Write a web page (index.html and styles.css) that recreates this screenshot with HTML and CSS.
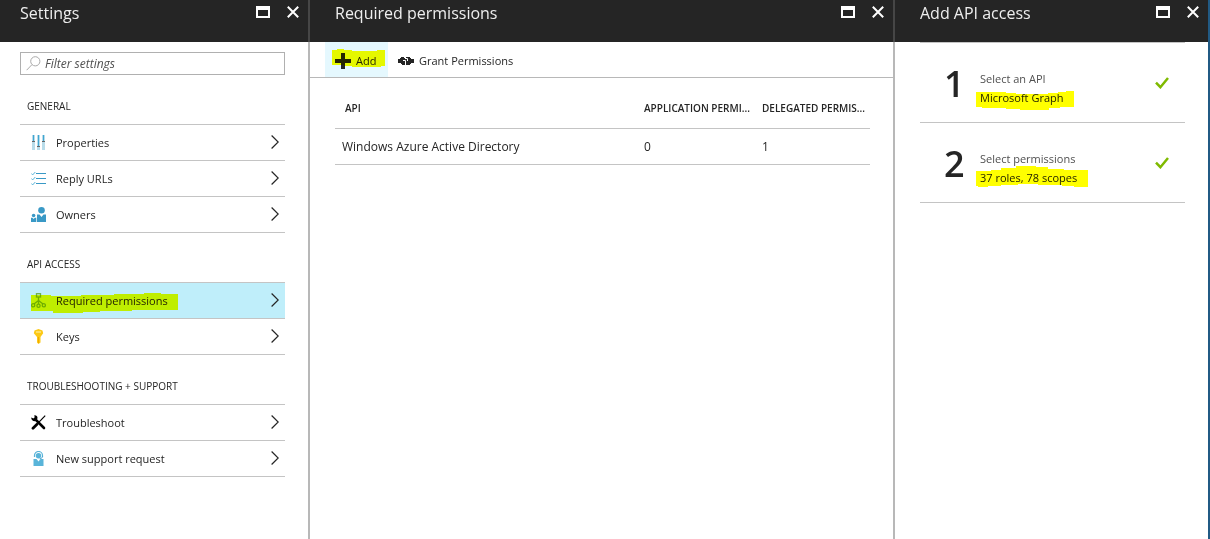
FILE: index.html
```html
<!DOCTYPE html>
<html lang="en">
<head>
<meta charset="utf-8">
<title>Settings</title>
<link rel="stylesheet" href="styles.css">
</head>
<body>
<svg class="defs" aria-hidden="true">
  <symbol id="max" viewBox="0 0 14 12"><path d="M0 0h14v12H0zM2 4v6h10V4z" fill="currentColor" fill-rule="evenodd"/></symbol>
  <symbol id="close" viewBox="0 0 12 12"><path d="M.8.8l10.4 10.4M11.2.8L.8 11.2" stroke="currentColor" stroke-width="2" fill="none"/></symbol>
  <symbol id="chev" viewBox="0 0 8 15"><path d="M.6.5L7.2 7 .6 13.500" stroke="currentColor" stroke-width="1.2" fill="none"/></symbol>
  <symbol id="tick" viewBox="0 0 14 12"><path d="M1 5.6l4.4 4.6L13 1" stroke="#7fba00" stroke-width="2.500" fill="none"/></symbol>
</svg>
<main class="blades">
  <section class="blade">
    <header class="blade-head">
      <h1>Settings</h1>
      <button class="win" aria-label="Maximize settings"><svg width="14" height="12"><use href="#max"/></svg></button>
      <button class="win" aria-label="Close settings"><svg width="12" height="12"><use href="#close"/></svg></button>
    </header>
    <div class="settings">
      <label class="filter">
        <svg width="15" height="15" viewBox="0 0 15 15" fill="none" stroke="#aaa"><circle cx="9.3" cy="5.3" r="4.6"/><path d="M6 8.6L.6 14.2"/></svg>
        <input type="text" placeholder="Filter settings" aria-label="Filter settings">
      </label>
      <h2>GENERAL</h2>
      <ul class="menu">
        <li><a href="#properties">
          <svg class="icon" viewBox="0 0 15 15"><path d="M1 0h3v15H1zM6 0h3v15H6zM11 0h3v15h-3z" fill="#b8dcea"/><path d="M2 0h1v6H2zM7 0h1v11H7zM12 0h1v6h-1z" fill="#3fa6d2"/><path d="M1 6h3v1H1zM6 11h3v1H6zM11 6h3v1h-3z" fill="#666"/></svg>
          <span>Properties</span><svg class="chev"><use href="#chev"/></svg></a></li>
        <li><a href="#reply-urls">
          <svg class="icon" viewBox="0 0 15 15"><g fill="none" stroke="#59b4d9"><path d="M.3 2.500l1.400 1.400L4.300 1M.3 7.500l1.400 1.400L4.300 6M.3 12.500l1.400 1.400L4.300 11"/><path d="M5 2.500h10M5 7.500h10M5 12.500h10" stroke="#3999c6"/></g></svg>
          <span>Reply URLs</span><svg class="chev"><use href="#chev"/></svg></a></li>
        <li><a href="#owners">
          <svg class="icon" viewBox="0 0 15 15" fill="#3999c6"><circle cx="10.500" cy="3.300" r="3.300"/><path d="M6 7.500h2.500l2 2.600 2-2.600H15V15H6z"/><circle cx="2.600" cy="8.500" r="1.800"/><path d="M0 10.800h1.500l1.100 1.300 1.100-1.300h1.600V15H0z"/></svg>
          <span>Owners</span><svg class="chev"><use href="#chev"/></svg></a></li>
      </ul>
      <h2>API ACCESS</h2>
      <ul class="menu">
        <li><a class="active" href="#required-permissions">
          <svg class="icon" viewBox="0 0 15 15" fill="none" stroke="#6fae4a" stroke-width="1.300"><rect x="5.500" y=".7" width="4" height="3.300"/><path d="M7.500 4v7M7.500 7.500L3 11M7.500 7.500l4.500 3.500"/><circle cx="2.200" cy="12.300" r="1.600"/><circle cx="7.500" cy="12.700" r="1.600"/><circle cx="12.800" cy="12.300" r="1.600"/></svg>
          <span>Required permissions</span><svg class="chev"><use href="#chev"/></svg>
          <svg class="mark mark-req" viewBox="0 0 147 21"><path d="M0 2h20v1h30V2h33V1h30V0h17v1h17v16h-46v1h-32v1H52v1H22v-2H0z"/></svg></a></li>
        <li><a href="#keys">
          <svg class="icon" viewBox="0 0 15 15"><path d="M7.500 0l4 1.500.7 2.800L9.500 8v5.500L7.500 15 6 13.500V8L2.800 4.300l.7-2.800z" fill="#fcc916"/><path d="M7.500 8v6" stroke="#f2a900"/><path d="M5 3h5" stroke="#fff3b0"/></svg>
          <span>Keys</span><svg class="chev"><use href="#chev"/></svg></a></li>
      </ul>
      <h2>TROUBLESHOOTING + SUPPORT</h2>
      <ul class="menu">
        <li><a href="#troubleshoot">
          <svg class="icon" viewBox="0 0 15 15"><path d="M4 4l9 9" stroke="#000" stroke-width="2.600" stroke-linecap="round"/><path d="M.3 2.500l2.200 1 1.200-1L3.300.3c2.200-.4 3.700 1.400 3 3.500L4.300 6.100C2.100 6.500 0 4.800.3 2.500z" fill="#000"/><path d="M14.200.7L7.500 7.600" stroke="#000" stroke-width="1.200"/><path d="M6 9.300l-4 4" stroke="#000" stroke-width="2.800" stroke-linecap="round"/></svg>
          <span>Troubleshoot</span><svg class="chev"><use href="#chev"/></svg></a></li>
        <li><a href="#new-support-request">
          <svg class="icon" viewBox="0 0 15 15"><path d="M3.500 6V4.500a4 4 0 0 1 8 0V6" fill="none" stroke="#59b4d9" stroke-width="1.200"/><circle cx="7.500" cy="4.700" r="2.700" fill="#59b4d9"/><path d="M2.500 8h3l2 2.600 2-2.600h3v7h-10z" fill="#59b4d9"/><path d="M11.500 5.500q0 2-2.800 2.300" fill="none" stroke="#3999c6" stroke-width=".8"/></svg>
          <span>New support request</span><svg class="chev"><use href="#chev"/></svg></a></li>
      </ul>
    </div>
  </section>

  <section class="blade">
    <header class="blade-head">
      <h1>Required permissions</h1>
      <button class="win" aria-label="Maximize required permissions"><svg width="14" height="12"><use href="#max"/></svg></button>
      <button class="win" aria-label="Close required permissions"><svg width="12" height="12"><use href="#close"/></svg></button>
    </header>
    <div class="toolbar">
      <button class="cmd hover">
        <svg width="16" height="16" viewBox="0 0 16 16"><path d="M6 0h4v6h6v4h-6v6H6v-6H0V6h6z" fill="#252525"/></svg>
        <span>Add</span>
        <svg class="mark mark-add" viewBox="0 0 53 18"><path d="M0 1h5V0h7v1h8v1h25V1h8v16h-4v1H20v-1h-8v-1H0z"/></svg>
      </button>
      <button class="cmd">
        <svg width="16" height="16" viewBox="0 0 16 16"><path d="M0 6h2V5h1V4h3v1h2V4h4v1h1v1h3v4h-3v1h-1v1H8v-1H7v1H4v-1H3v-1H0z" fill="#252525"/><path d="M5 7.500h2.500V11M7 5.500h2.500V8" stroke="#fff" fill="none"/></svg>
        <span>Grant Permissions</span>
      </button>
    </div>
    <table class="grid">
      <thead><tr><th>API</th><th class="num" title="Application permissions">APPLICATION PERMI...</th><th class="num" title="Delegated permissions">DELEGATED PERMIS...</th></tr></thead>
      <tbody><tr><td>Windows Azure Active Directory</td><td class="num">0</td><td class="num">1</td></tr></tbody>
    </table>
  </section>

  <section class="blade last">
    <header class="blade-head">
      <h1>Add API access</h1>
      <button class="win" aria-label="Maximize add API access"><svg width="14" height="12"><use href="#max"/></svg></button>
      <button class="win" aria-label="Close add API access"><svg width="12" height="12"><use href="#close"/></svg></button>
    </header>
    <ol class="steps">
      <li><a href="#select-api">
        <span class="no">1</span>
        <span class="step"><span class="sub">Select an API</span><span class="value">Microsoft Graph<svg class="mark mark-graph" viewBox="0 0 98 20"><path d="M0 1h30v1h10v1h32V2h10V1h8V0h8v16H84v1H73v2H44v-1H30v-1H6v-1H0z"/></svg></span></span>
        <svg class="tick"><use href="#tick"/></svg></a></li>
      <li><a href="#select-permissions">
        <span class="no">2</span>
        <span class="step"><span class="sub">Select permissions</span><span class="value">37 roles, 78 scopes<svg class="mark mark-roles" viewBox="0 0 112 22"><path d="M0 5h15V4h10V2h15V0h20v1h12v2h16v1h24v17h-14v-1H86v-1H62v-1H42v1H25v1H12v1H2v-1H0z"/></svg></span></span>
        <svg class="tick"><use href="#tick"/></svg></a></li>
    </ol>
  </section>
</main>
</body>
</html>
```
FILE: styles.css
```css
* { box-sizing: border-box; }
body {
  margin: 0;
  background: #fff;
  color: #252525;
  font: 12px/16px "Open Sans", "Noto Sans", sans-serif;
}
button, input { font: inherit; color: inherit; }
button { border: 0; background: none; padding: 0; cursor: pointer; }
a { color: inherit; text-decoration: none; }
ul, ol { list-style: none; margin: 0; padding: 0; }
svg { display: block; flex: none; }
.defs { display: none; }

.blades {
  display: grid;
  grid-template-columns: 310px minmax(0, 1fr) 315px;
  min-height: 100vh;
}
.blade { border-right: 2px solid #b8b8b8; }
.blade-head {
  display: flex;
  align-items: flex-start;
  gap: 17px;
  height: 42px;
  margin-right: -2px;
  padding: 1px 9px 0 25px;
  border-right: 2px solid #464646;
  background: #252525;
  color: #fff;
}
.blade:first-child .blade-head { padding-left: 20px; }
.blade-head h1 {
  flex: 1;
  margin: 0;
  font-size: 16px;
  line-height: 24px;
  font-weight: 400;
  color: #eee;
}
.win { padding-top: 5px; }
.last, .last .blade-head { border-right-color: #215a84; }

.settings { padding: 10px 23px 0 20px; }
.filter {
  display: flex;
  align-items: center;
  gap: 4px;
  height: 23px;
  padding: 0 5px;
  border: 1px solid #b0b0b0;
}
.filter input {
  flex: 1;
  min-width: 0;
  padding: 0;
  border: 0;
  outline: 0;
  background: none;
  font-style: italic;
}
.filter input::placeholder { color: #505050; opacity: 1; }
.settings h2 {
  margin: 0;
  padding: 23px 7px 10px;
  font-size: 10px;
  line-height: 16px;
  font-weight: 400;
}
.menu { border-top: 1px solid #c4c4c4; }
.menu a {
  position: relative;
  display: flex;
  align-items: center;
  gap: 10px;
  height: 36px;
  padding: 0 6px 0 11px;
  border-bottom: 1px solid #c4c4c4;
  font-size: 11px;
}
.menu span { flex: 1; }
.menu .active { background: #bfeefa; }
.icon { width: 15px; height: 15px; }
.chev { width: 8px; height: 15px; }

.mark {
  position: absolute;
  fill: #ff0;
  mix-blend-mode: multiply;
  pointer-events: none;
}
.mark-req { left: 11px; top: 10px; width: 147px; height: 21px; }
.mark-add { left: 7px; top: 7px; width: 53px; height: 18px; }
.mark-graph { left: -4px; top: 1px; width: 98px; height: 20px; }
.mark-roles { left: -4px; top: -4px; width: 112px; height: 22px; }

.toolbar {
  display: flex;
  height: 36px;
  padding-left: 15px;
  border-bottom: 1px solid #b8b8b8;
}
.cmd {
  position: relative;
  display: flex;
  align-items: center;
  gap: 5px;
  padding: 2px 10px 0;
  font-size: 11px;
}
.cmd.hover { width: 63px; background: #e5f8fe; }

.grid {
  width: calc(100% - 48px);
  margin: 10px 23px 0 25px;
  border-collapse: separate;
  border-spacing: 0;
  table-layout: fixed;
}
.grid th, .grid td {
  padding: 0 0 0 10px;
  border-bottom: 1px solid #c4c4c4;
  text-align: left;
  white-space: nowrap;
}
.grid th { height: 41px; font-size: 10px; font-weight: 600; }
.grid td { height: 36px; }
.grid td:first-child { padding-left: 7px; }
.grid .num { width: 118px; }

.steps { margin: 0 23px 0 25px; border-top: 1px solid #c4c4c4; }
.steps a {
  display: flex;
  align-items: center;
  height: 80px;
  padding: 0 16px 0 24px;
  border-bottom: 1px solid #c4c4c4;
  font-size: 11px;
}
.no { width: 36px; padding-top: 3px; font-size: 36px; line-height: 48px; font-weight: 600; }
.step { flex: 1; display: grid; gap: 3px; padding-top: 11px; }
.sub { color: #505050; }
.value { position: relative; justify-self: start; }
.tick { width: 14px; height: 12px; }
```
